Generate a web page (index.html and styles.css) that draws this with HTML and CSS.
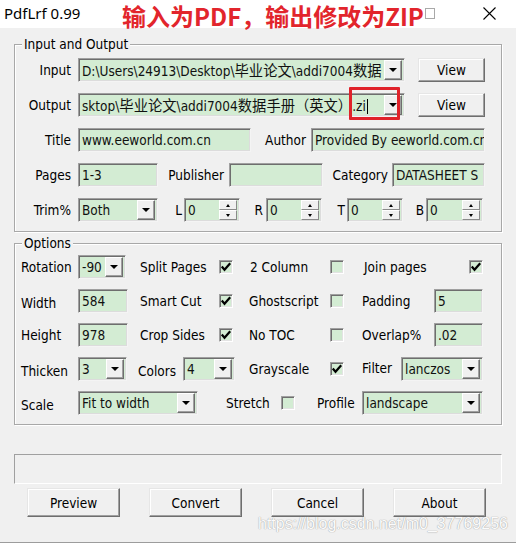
FILE: index.html
```html
<!DOCTYPE html>
<html>
<head>
<meta charset="utf-8">
<title>PdfLrf 0.99</title>
<link rel="stylesheet" href="styles.css">
</head>
<body>
<div class="window">
  <div class="titlebar">
    <span class="app-title">PdfLrf 0.99</span>
    <span class="note">输入为PDF，输出修改为ZIP</span>
    <span class="box-glyph"></span>
    <svg class="close" width="13" height="13" viewBox="0 0 13 13"><path d="M0.5 0.5 L12.5 12.5 M12.5 0.5 L0.5 12.5" stroke="#000" stroke-width="1.1" fill="none"/></svg>
  </div>

  <div class="content">
    <div class="group io">
      <span class="legend">Input and Output</span>

      <div class="row">
        <span class="io-lab">Input</span>
        <div class="fld combo w-path"><span class="txt">D:\Users\24913\Desktop\<span class="cjk">毕业论文</span>\addi7004<span class="cjk">数据</span></span><span class="drop"><i class="tri"></i></span></div>
        <button class="btn view">View</button>
      </div>

      <div class="row">
        <span class="io-lab">Output</span>
        <div class="fld combo w-path"><span class="txt">sktop\<span class="cjk">毕业论文</span>\addi7004<span class="cjk">数据手册（英文）</span>.zi<i class="caret"></i></span><span class="drop"><i class="tri"></i></span></div>
        <button class="btn view">View</button>
        <span class="highlight"></span>
      </div>

      <div class="row">
        <span class="io-lab">Title</span>
        <div class="fld w-title">www.eeworld.com.cn</div>
        <span class="lab-author">Author</span>
        <div class="fld w-author">Provided By eeworld.com.cn</div>
      </div>

      <div class="row">
        <span class="io-lab">Pages</span>
        <div class="fld w80">1-3</div>
        <span class="lab-publisher">Publisher</span>
        <div class="fld w-publisher"></div>
        <span class="lab-category">Category</span>
        <div class="fld w-category">DATASHEET S</div>
      </div>

      <div class="row">
        <span class="io-lab">Trim%</span>
        <div class="fld combo w80"><span class="txt">Both</span><span class="drop"><i class="tri"></i></span></div>
        <span class="lab-l">L</span>
        <div class="fld spin w56"><span class="txt">0</span><span class="spinbtns"><span class="sb"><i class="up"></i></span><span class="sb"><i class="dn"></i></span></span></div>
        <span class="lab-r">R</span>
        <div class="fld spin w56"><span class="txt">0</span><span class="spinbtns"><span class="sb"><i class="up"></i></span><span class="sb"><i class="dn"></i></span></span></div>
        <span class="lab-t">T</span>
        <div class="fld spin w56"><span class="txt">0</span><span class="spinbtns"><span class="sb"><i class="up"></i></span><span class="sb"><i class="dn"></i></span></span></div>
        <span class="lab-b">B</span>
        <div class="fld spin w57"><span class="txt">0</span><span class="spinbtns"><span class="sb"><i class="up"></i></span><span class="sb"><i class="dn"></i></span></span></div>
      </div>
    </div>

    <div class="group opts">
      <span class="legend">Options</span>

      <div class="row">
        <span class="o-first">Rotation</span>
        <div class="fld combo w48"><span class="txt">-90</span><span class="drop"><i class="tri"></i></span></div>
        <span class="o-split">Split Pages</span>
        <span class="cb"><svg width="12" height="12" viewBox="0 0 12 12"><path d="M1.8 5.5 L4.5 8.8 L10.2 2.2" stroke="#000" stroke-width="2.2" fill="none"/></svg></span>
        <span class="o-col">2 Column</span>
        <span class="cb"></span>
        <span class="o-join">Join pages</span>
        <span class="cb"><svg width="12" height="12" viewBox="0 0 12 12"><path d="M1.8 5.5 L4.5 8.8 L10.2 2.2" stroke="#000" stroke-width="2.2" fill="none"/></svg></span>
      </div>

      <div class="row">
        <span class="o-first low">Width</span>
        <div class="fld w50">584</div>
        <span class="o-second">Smart Cut</span>
        <span class="cb"><svg width="12" height="12" viewBox="0 0 12 12"><path d="M1.8 5.5 L4.5 8.8 L10.2 2.2" stroke="#000" stroke-width="2.2" fill="none"/></svg></span>
        <span class="o-third">Ghostscript</span>
        <span class="cb"></span>
        <span class="o-fourth">Padding</span>
        <div class="fld w49">5</div>
      </div>

      <div class="row">
        <span class="o-first">Height</span>
        <div class="fld w50">978</div>
        <span class="o-second">Crop Sides</span>
        <span class="cb"><svg width="12" height="12" viewBox="0 0 12 12"><path d="M1.8 5.5 L4.5 8.8 L10.2 2.2" stroke="#000" stroke-width="2.2" fill="none"/></svg></span>
        <span class="o-third">No TOC</span>
        <span class="cb"></span>
        <span class="o-fourth">Overlap%</span>
        <div class="fld w49">.02</div>
      </div>

      <div class="row">
        <span class="o-first low">Thicken</span>
        <div class="fld combo w49"><span class="txt">3</span><span class="drop"><i class="tri"></i></span></div>
        <span class="o-colors low">Colors</span>
        <div class="fld combo w52"><span class="txt">4</span><span class="drop"><i class="tri"></i></span></div>
        <span class="o-gray">Grayscale</span>
        <span class="cb"><svg width="12" height="12" viewBox="0 0 12 12"><path d="M1.8 5.5 L4.5 8.8 L10.2 2.2" stroke="#000" stroke-width="2.2" fill="none"/></svg></span>
        <span class="o-filter high">Filter</span>
        <div class="fld combo w82"><span class="txt">lanczos</span><span class="drop"><i class="tri"></i></span></div>
      </div>

      <div class="row">
        <span class="o-first low">Scale</span>
        <div class="fld combo w120"><span class="txt">Fit to width</span><span class="drop"><i class="tri"></i></span></div>
        <span class="o-stretch">Stretch</span>
        <span class="cb"></span>
        <span class="o-profile">Profile</span>
        <div class="fld combo w121"><span class="txt">landscape</span><span class="drop"><i class="tri"></i></span></div>
      </div>
    </div>

    <div class="status"></div>

    <div class="actions">
      <button class="btn big">Preview</button>
      <button class="btn big">Convert</button>
      <button class="btn big">Cancel</button>
      <button class="btn big">About</button>
    </div>
  </div>

  <span class="watermark">https://blog.csdn.net/m0_37769256</span>
</div>
</body>
</html>
```

FILE: styles.css
```css
* { box-sizing: border-box; }
html, body { margin: 0; padding: 0; }
body {
  width: 516px;
  height: 543px;
  overflow: hidden;
  background: #f0f0f0;
  font-family: "DejaVu Sans Condensed", "DejaVu Sans", "Noto Sans CJK SC", sans-serif;
  font-stretch: condensed;
  font-size: 13.5px;
  color: #000;
}
.window {
  position: relative;
  width: 516px;
  height: 543px;
  border-bottom: 1px solid #9c9c9c;
}

/* title bar */
.titlebar {
  height: 28px;
  background: #fff;
  display: flex;
  align-items: flex-start;
}
.app-title {
  width: 122px;
  flex: none;
  padding: 3px 0 0 4px;
  font-family: "Noto Sans", sans-serif;
  font-stretch: normal;
  font-size: 15px;
  line-height: 20px;
  color: #000;
}
.note {
  flex: none;
  margin-top: -3px;
  padding-top: 1px;
  font-family: "Noto Sans CJK SC", sans-serif;
  font-stretch: normal;
  font-weight: 700;
  font-size: 24px;
  line-height: 35px;
  color: #e2252c;
  white-space: nowrap;
}
.box-glyph {
  width: 10px;
  height: 11px;
  margin: 8px 0 0 1px;
  border: 1px solid #a9a9a9;
  flex: none;
}
.close { margin: 7px 0 0 48px; flex: none; }

/* content */
.content { padding: 16px 14px 0 14px; }

.group {
  position: relative;
  width: 488px;
  border: 1px solid #a8a8a8;
  box-shadow: inset 1px 1px 0 #fff, 1px 1px 0 #fff;
}
.legend {
  position: absolute;
  top: -9px;
  left: 7px;
  padding: 0 2px;
  line-height: 16px;
  background: #f0f0f0;
}
.io { height: 188px; padding-top: 13px; }
.opts { margin-top: 11px; height: 182px; padding-top: 11px; }

.row { display: flex; align-items: center; height: 24px; position: relative; }
.io .row + .row { margin-top: 11px; }
.opts .row { padding-left: 6px; }
.opts .row + .row { margin-top: 10px; }

.row > span { flex: none; white-space: nowrap; }
.row > .low { padding-top: 3px; }
.row > .high { padding-bottom: 3px; }

/* input/output labels */
.io-lab { width: 56px; margin-right: 7px; text-align: right; }
.lab-author { width: 60px; padding-right: 5px; text-align: right; }
.lab-publisher { width: 71px; padding-right: 5px; text-align: right; }
.lab-category { width: 69px; padding-right: 4px; text-align: right; }
.lab-l { width: 26px; padding-right: 2px; text-align: right; }
.lab-r { width: 26px; padding-right: 3px; text-align: right; }
.lab-t { width: 25px; padding-right: 2px; text-align: right; }
.lab-b { width: 23px; padding-right: 2px; text-align: right; }

/* options labels */
.o-first { width: 57px; }
.o-split { width: 93px; padding-left: 14px; }
.o-col { width: 97px; padding-left: 17px; }
.o-join { width: 125px; padding-left: 20px; }
.o-second { width: 91px; padding-left: 12px; }
.o-third { width: 97px; padding-left: 16px; }
.o-fourth { width: 90px; padding-left: 18px; }
.o-colors { width: 56px; padding-left: 11px; }
.o-gray { width: 95px; padding-left: 14px; }
.o-filter { width: 57px; padding-left: 18px; }
.o-stretch { width: 83px; padding-left: 28px; }
.o-profile { width: 67px; padding-left: 22px; }

/* fields */
.fld {
  flex: none;
  height: 24px;
  display: flex;
  align-items: center;
  padding: 0 2px 0 3px;
  background: #d3ecd3;
  border: 1px solid;
  border-color: #a0a0a0 #f4f4f4 #f4f4f4 #a0a0a0;
  box-shadow: inset 1px 1px 0 #6e6e6e, inset -1px -1px 0 #dcdcdc;
  white-space: nowrap;
  overflow: hidden;
  line-height: 21px;
  color: #111;
}
.fld .txt { flex: 1; min-width: 0; overflow: hidden; white-space: nowrap; }
.cjk { font-family: "Noto Sans CJK SC", sans-serif; font-stretch: normal; font-size: 14.3px; }
.w-path { width: 327px; margin-right: 13px; }
.w-title { width: 173px; }
.w-author { width: 174px; }
.w-publisher { width: 94px; }
.w-category { width: 93px; }
.w80 { width: 80px; }
.w56 { width: 56px; }
.w57 { width: 57px; }
.w48 { width: 48px; }
.w49 { width: 49px; }
.w50 { width: 50px; }
.w52 { width: 52px; }
.w82 { width: 82px; }
.w120 { width: 120px; }
.w121 { width: 121px; }

.caret {
  display: inline-block;
  width: 1px;
  height: 15px;
  margin-left: 1px;
  vertical-align: -3px;
  background: #000;
}

.drop {
  flex: none;
  width: 18px;
  height: 20px;
  display: flex;
  align-items: center;
  justify-content: center;
  background: #f0f0f0;
  border: 1px solid;
  border-color: #fff #6e6e6e #6e6e6e #fff;
  box-shadow: inset -1px -1px 0 #a0a0a0;
}
.tri {
  width: 0;
  height: 0;
  border-left: 4px solid transparent;
  border-right: 4px solid transparent;
  border-top: 4px solid #000;
}

.spinbtns {
  flex: none;
  width: 18px;
  height: 20px;
  display: flex;
  flex-direction: column;
}
.sb {
  flex: 1;
  display: flex;
  align-items: center;
  justify-content: center;
  background: #f0f0f0;
  border: 1px solid;
  border-color: #fff #8a8a8a #8a8a8a #fff;
}
.up {
  width: 0; height: 0;
  border-left: 2.5px solid transparent;
  border-right: 2.5px solid transparent;
  border-bottom: 3px solid #000;
}
.dn {
  width: 0; height: 0;
  border-left: 2.5px solid transparent;
  border-right: 2.5px solid transparent;
  border-top: 3px solid #000;
}

/* checkbox */
.cb {
  width: 14px;
  height: 14px;
  display: flex;
  align-items: center;
  justify-content: center;
  background: #d3ecd3;
  border: 1px solid;
  border-color: #a0a0a0 #fff #fff #a0a0a0;
  box-shadow: inset 1px 1px 0 #6e6e6e, inset -1px -1px 0 #e3e3e3;
}
.cb svg { display: block; }

/* highlight annotation */
.highlight {
  position: absolute;
  left: 334px;
  top: -6px;
  width: 51px;
  height: 33px;
  border: 3px solid #e0222a;
  border-radius: 1px;
}

/* buttons */
.btn {
  flex: none;
  display: flex;
  align-items: center;
  justify-content: center;
  padding: 0;
  font: inherit;
  color: #000;
  background: #f0f0f0;
  border: 1px solid;
  border-color: #e6e6e6 #6e6e6e #6e6e6e #e6e6e6;
  box-shadow: inset -1px -1px 0 #a0a0a0, inset 1px 1px 0 #fff;
}
.view { width: 67px; height: 24px; }
.big { width: 93px; height: 29px; }

.status {
  margin-top: 29px;
  width: 488px;
  height: 30px;
  border: 1px solid;
  border-color: #a0a0a0 #fff #fff #a0a0a0;
}
.actions {
  display: flex;
  gap: 29px;
  margin-top: 4px;
  padding-left: 13px;
}

.watermark {
  position: absolute;
  left: 258px;
  top: 515px;
  font-family: "Liberation Sans", sans-serif;
  font-stretch: normal;
  font-size: 16px;
  line-height: 18px;
  color: #fbfbfb;
  text-shadow: 0 0 1px #a8a8a8, 0 0 1px #a8a8a8;
  white-space: nowrap;
}
```
